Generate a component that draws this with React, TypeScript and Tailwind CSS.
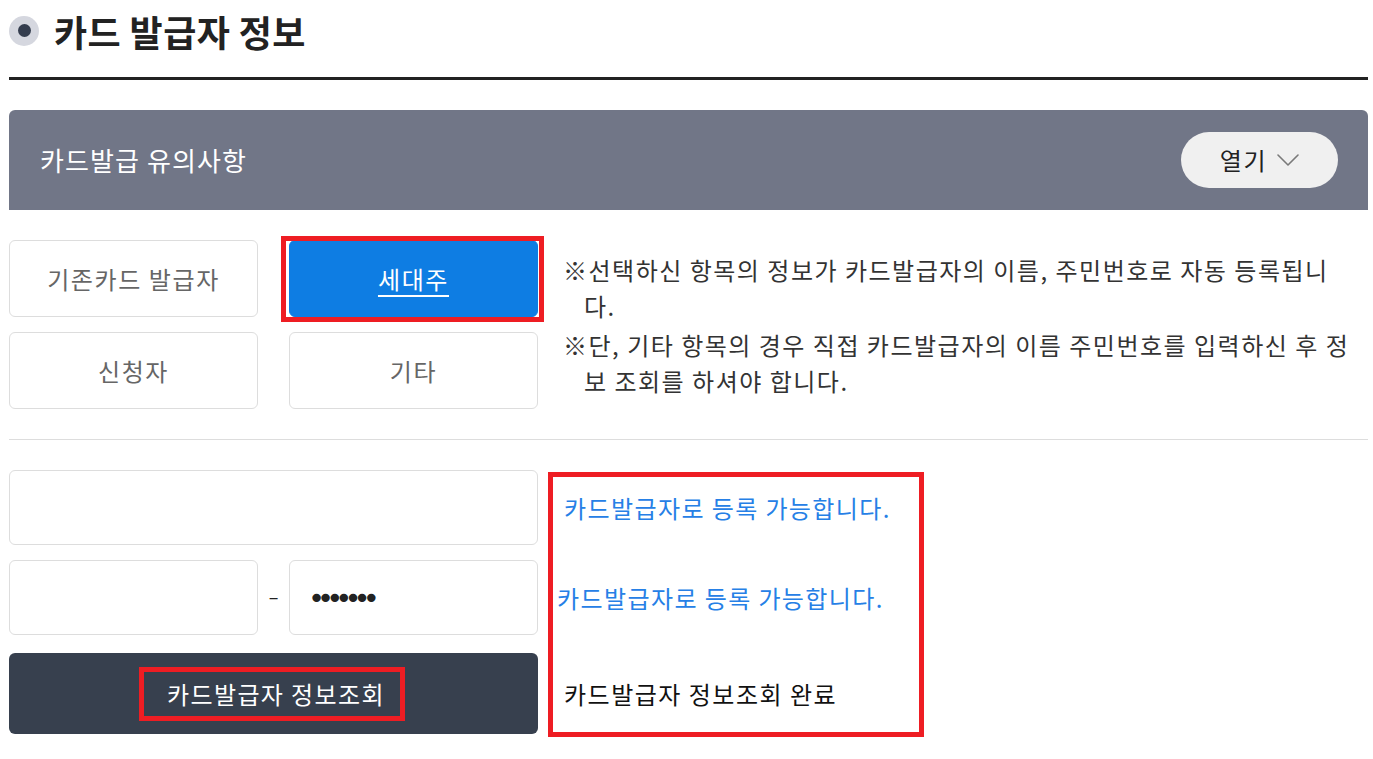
import React from "react";

function Chevron() {
  return (
    <svg width="22" height="12" viewBox="0 0 22 12" fill="none" aria-hidden="true">
      <path d="M1 1l10 10L21 1" stroke="#7a7a7a" strokeWidth="1.6" strokeLinecap="round" strokeLinejoin="round" />
    </svg>
  );
}

const choices = [
  { label: "기존카드 발급자", selected: false },
  { label: "세대주", selected: true },
  { label: "신청자", selected: false },
  { label: "기타", selected: false },
];

export default function App() {
  return (
    <div className="min-h-[759px] w-full bg-white font-['Noto_Sans_CJK_KR','Malgun_Gothic',sans-serif] text-[#222]">
      <div className="ml-[9px] w-[1359px]">
        {/* Title */}
        <div className="flex h-[77px] items-center gap-[15px] pb-[16px]">
          <span className="flex h-[30px] w-[30px] items-center justify-center rounded-full bg-[#d5d7df]">
            <span className="h-[13px] w-[13px] rounded-full bg-[#343d4e]" />
          </span>
          <h2 className="text-[36px] font-bold leading-none tracking-[0.4px] text-[#222]">카드 발급자 정보</h2>
        </div>
        <div className="h-[3px] bg-[#222]" />

        {/* Notice header */}
        <div className="mt-[30px] flex h-[100px] items-center justify-between rounded-t-[6px] bg-[#717687] pl-[31px] pr-[30px]">
          <span className="text-[26px] leading-none tracking-[1.1px] text-white">카드발급 유의사항</span>
          <button className="flex h-[56px] w-[157px] items-center justify-center gap-[10px] rounded-full bg-[#f0f0f0]">
            <span className="text-[24px] leading-none tracking-[1.6px] text-[#222]">열기</span>
            <Chevron />
          </button>
        </div>

        {/* Choices */}
        <div className="mt-[30px] flex">
          <div className="grid w-[529px] shrink-0 grid-cols-[249px_249px] gap-x-[31px] gap-y-[15px]">
            {choices.map((c) => (
              <div key={c.label} className="relative">
                <button
                  className={
                    c.selected
                      ? "flex h-[77px] w-full items-center justify-center rounded-[6px] border border-[#0e7de3] bg-[#0e7de3] text-[24px] tracking-[1.6px] text-white underline underline-offset-[6px] decoration-[1.5px]"
                      : "flex h-[77px] w-full items-center justify-center rounded-[6px] border border-[#dddddd] bg-white text-[24px] tracking-[1.6px] text-[#666]"
                  }
                >
                  {c.label}
                </button>
                {c.selected && (
                  <span className="pointer-events-none absolute -bottom-[5px] -left-[8px] -right-[6px] -top-[4px] border-[5px] border-[#ee1d23]" />
                )}
              </div>
            ))}
          </div>
          <div className="ml-[25px] pt-[12px] text-[24px] leading-[36px] tracking-[1.5px] text-[#333] whitespace-nowrap">
            <p className="pl-[21px] -indent-[21px]">
              ※선택하신 항목의 정보가 카드발급자의 이름, 주민번호로 자동 등록됩니
              <br />
              다.
            </p>
            <p className="mt-[3px] pl-[21px] -indent-[21px]">
              ※단, 기타 항목의 경우 직접 카드발급자의 이름 주민번호를 입력하신 후 정
              <br />
              보 조회를 하셔야 합니다.
            </p>
          </div>
        </div>

        <div className="mt-[30px] h-px bg-[#dddddd]" />

        {/* Form */}
        <div className="mt-[30px] flex">
          <div className="flex w-[529px] shrink-0 flex-col">
            <input
              type="text"
              className="h-[75px] w-full rounded-[6px] border border-[#dddddd] bg-white px-[22px] text-[20px] outline-none"
            />
            <div className="mt-[15px] flex h-[75px] items-center">
              <input
                type="text"
                className="h-full w-[249px] rounded-[6px] border border-[#dddddd] bg-white px-[22px] text-[20px] outline-none"
              />
              <span className="flex flex-1 justify-center pb-[4px] text-[18px] leading-none text-[#222]">–</span>
              <input
                type="password"
                readOnly
                value="1234567"
                className="h-full w-[249px] rounded-[6px] border border-[#dddddd] bg-white pl-[18px] pr-[10px] font-['DejaVu_Sans',sans-serif] text-[29px] tracking-[-8px] text-[#222] outline-none"
              />
            </div>
            <button className="mt-[18px] flex h-[81px] w-full items-center justify-center rounded-[6px] bg-[#37404e] pr-[3px]">
              <span className="flex h-[54px] items-center border-[5px] border-[#ee1d23] pl-[23px] pr-[15px] text-[24px] leading-none tracking-[1.4px] text-white">
                카드발급자 정보조회
              </span>
            </button>
          </div>

          <div className="relative ml-[26px] flex w-[360px] flex-col">
            <div className="flex h-[75px] items-center text-[24px] leading-none tracking-[1.4px] text-[#2680e6]">
              카드발급자로 등록 가능합니다.
            </div>
            <div className="-ml-[7px] mt-[15px] flex h-[75px] items-center text-[24px] leading-none tracking-[1.4px] text-[#2680e6]">
              카드발급자로 등록 가능합니다.
            </div>
            <div className="mt-[18px] flex h-[81px] items-center text-[24px] leading-none tracking-[1.5px] text-[#111]">
              카드발급자 정보조회 완료
            </div>
            <span className="pointer-events-none absolute -bottom-[3px] -left-[16px] top-[2px] w-[376px] border-[5px] border-[#ee1d23]" />
          </div>
        </div>
      </div>
    </div>
  );
}
